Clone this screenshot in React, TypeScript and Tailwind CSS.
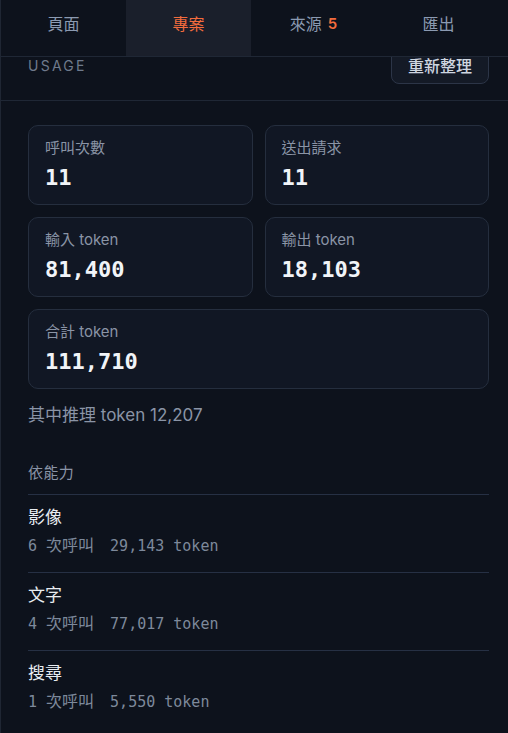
import React from "react";

const sans = "font-['Inter','Noto_Sans_CJK_TC',sans-serif]";
const mono = "font-['DejaVu_Sans_Mono','Noto_Sans_CJK_TC',monospace]";

const tabs = [
  { label: "頁面" },
  { label: "專案", active: true },
  { label: "來源", badge: "5" },
  { label: "匯出" },
];

const stats = [
  { label: "呼叫次數", value: "11" },
  { label: "送出請求", value: "11" },
  { label: "輸入 token", value: "81,400" },
  { label: "輸出 token", value: "18,103" },
  { label: "合計 token", value: "111,710", wide: true },
];

const capabilities = [
  { name: "影像", calls: "6", tokens: "29,143" },
  { name: "文字", calls: "4", tokens: "77,017" },
  { name: "搜尋", calls: "1", tokens: "5,550" },
];

function StatCard({ label, value, wide }: { label: string; value: string; wide?: boolean }) {
  return (
    <div
      className={`rounded-[10px] border border-[#252e3e] bg-[#111724] px-4 pt-3 pb-3 ${wide ? "col-span-2" : ""}`}
    >
      <p className="text-[15px] leading-5 text-[#8a94a6]">{label}</p>
      <p className={`${mono} mt-1.5 text-[22px] font-bold leading-7 text-[#f1f4f8]`}>{value}</p>
    </div>
  );
}

export default function App() {
  return (
    <div className={`${sans} min-h-[733px] overflow-hidden border-l border-[#1f2633] bg-[#0d121c]`}>
      <nav className="relative z-10 h-[57px] border-b border-[#1f2735] bg-[#0d121c]">
        <div className="grid h-full w-[500px] grid-cols-4">
          {tabs.map((tab) => (
            <div
              key={tab.label}
              className={`flex justify-center pt-3 text-base leading-6 ${
                tab.active ? "bg-[#1a1f2b] text-[#f36c3d]" : "text-[#8b9ab1]"
              }`}
            >
              {tab.label}
              {tab.badge && (
                <span className="ml-1.5 text-[15px] font-semibold text-[#f36c3d]">{tab.badge}</span>
              )}
            </div>
          ))}
        </div>
      </nav>

      <div className="-mt-[9px] flex items-center justify-between border-b border-[#1f2735] pb-4 pl-[27px] pr-[19px]">
        <span className="text-sm uppercase leading-5 tracking-[0.16em] text-[#6f7a8c]">Usage</span>
        <button className="h-9 rounded-lg border border-[#2c3547] bg-[#141a26] px-4 text-base font-medium text-[#cfd6e0]">
          重新整理
        </button>
      </div>

      <div className="pl-[27px] pr-[19px] pt-6">
        <div className="grid grid-cols-2 gap-3">
          {stats.map((s) => (
            <StatCard key={s.label} {...s} />
          ))}
        </div>

        <p className="mt-3.5 text-[17px] leading-6 text-[#8a94a6]">其中推理 token 12,207</p>

        <p className="mt-[35px] border-b border-[#263044] pb-2.5 text-[15px] leading-[22px] tracking-wide text-[#8a94a6]">
          依能力
        </p>

        <ul>
          {capabilities.map((c, i) => (
            <li
              key={c.name}
              className={`pt-2.5 pb-[15px] ${i < capabilities.length - 1 ? "border-b border-[#263044]" : ""}`}
            >
              <p className="text-[17px] leading-6 text-[#e8ecf1]">{c.name}</p>
              <div className={`${mono} mt-1.5 flex h-[22px] items-center gap-4 text-[15px] leading-[22px] text-[#7d899b]`}>
                <span>
                  {c.calls} <span className="text-base leading-4">次呼叫</span>
                </span>
                <span>{c.tokens} token</span>
              </div>
            </li>
          ))}
        </ul>
      </div>
    </div>
  );
}
